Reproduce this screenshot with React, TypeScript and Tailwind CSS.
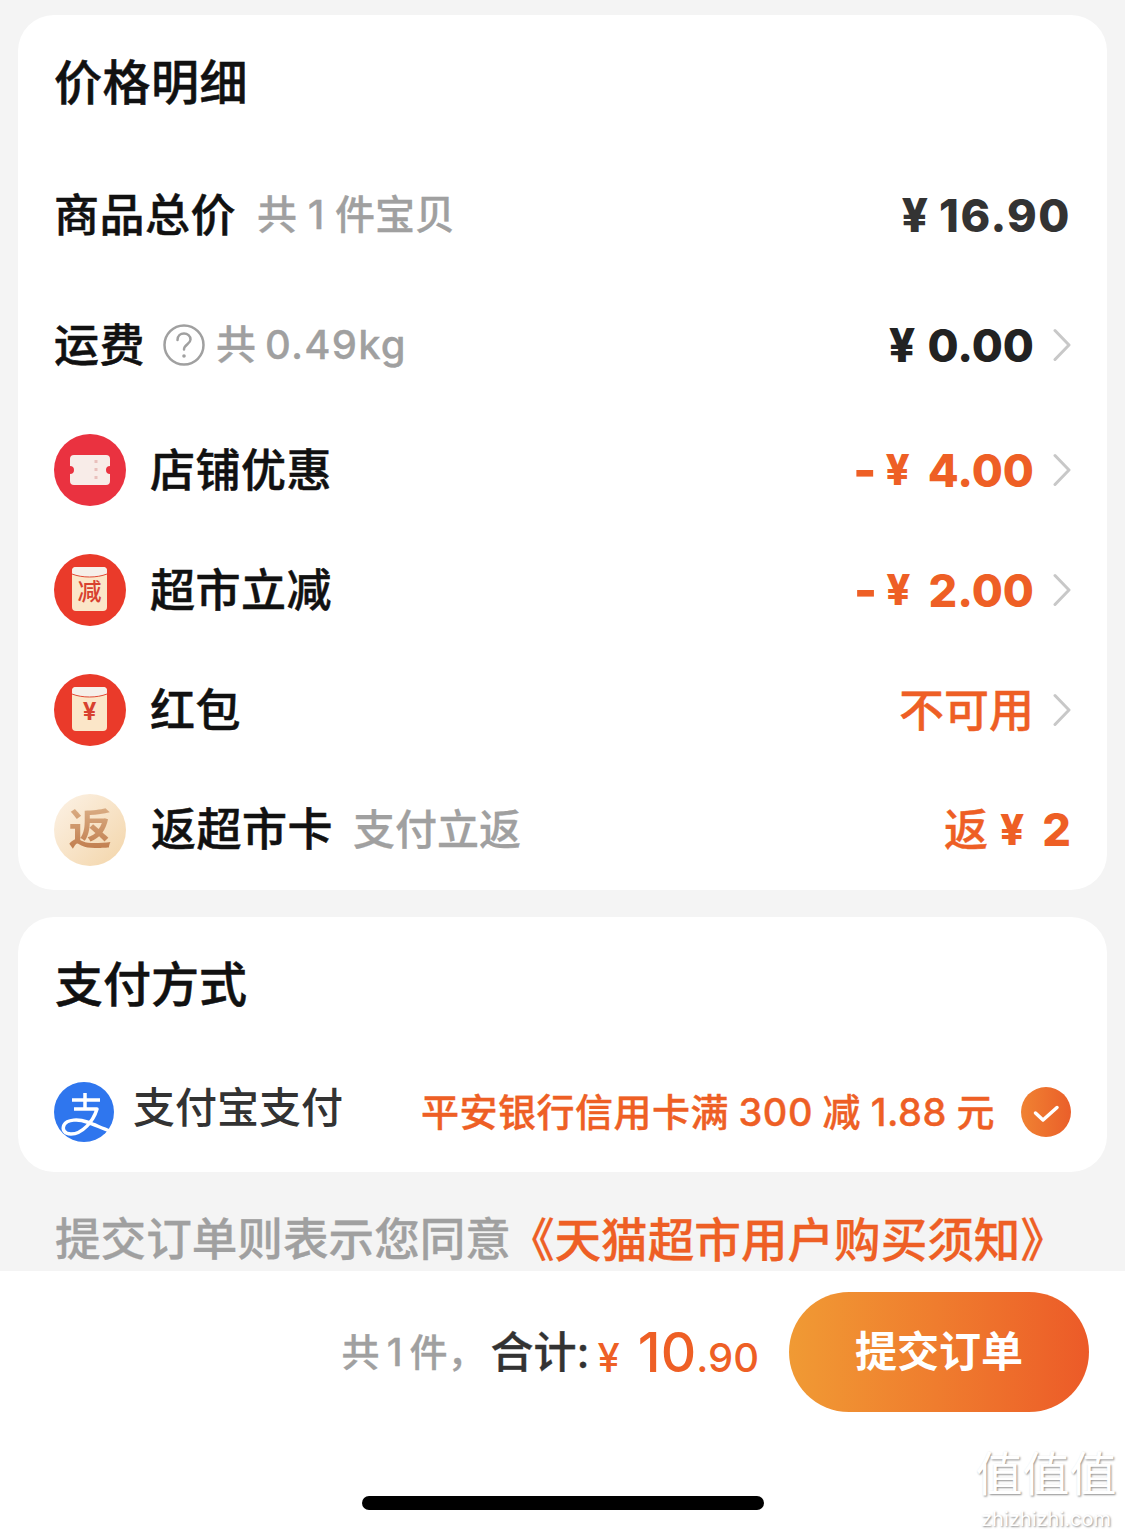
import type { ReactNode } from 'react';

const FONT = "font-['Inter','Noto_Sans_CJK_SC',sans-serif]";

function Chevron() {
  return (
    <svg width="22" height="36" viewBox="0 0 22 36" fill="none" className="ml-[15px] shrink-0">
      <path d="M6 3.500 20 18 6 32.500" stroke="#c8c8c8" strokeWidth="3" strokeLinecap="round" strokeLinejoin="round" />
    </svg>
  );
}

function Ticket() {
  return (
    <svg width="72" height="72" viewBox="0 0 72 72">
      <circle cx="36" cy="36" r="36" fill="#ea3240" />
      <path
        d="M20 21h32a4 4 0 0 1 4 4v7a4 4 0 0 0 0 8v7a4 4 0 0 1-4 4H20a4 4 0 0 1-4-4v-7a4 4 0 0 0 0-8v-7a4 4 0 0 1 4-4Z"
        fill="#f8ece8"
      />
      <path d="M42 26v20" stroke="#e9c0bc" strokeWidth="3" strokeDasharray="3 5" />
    </svg>
  );
}

function Envelope({ label, small }: { label: string; small?: boolean }) {
  return (
    <div className="relative h-[72px] w-[72px] shrink-0 rounded-full bg-[#ea3a2a]">
      <svg width="72" height="72" viewBox="0 0 72 72" className="absolute inset-0">
        <rect x="18" y="13" width="35" height="44" rx="4" fill="#fbe6c8" />
        <path d="M18 17a4 4 0 0 1 4-4h27a4 4 0 0 1 4 4v3c-10 4-25 4-35 0Z" fill="#f6f0ea" />
        <path d="M18 20c10 4 25 4 35 0" stroke="#e24a36" strokeWidth="1" fill="none" />
      </svg>
      <span
        className={`absolute inset-x-0 top-[24px] pr-[1px] text-center leading-[28px] text-[#d8412f] ${small ? 'text-[24px] font-bold' : 'text-[24px] font-medium'}`}
      >
        {label}
      </span>
    </div>
  );
}

function FanIcon() {
  return (
    <div className="flex h-[72px] w-[72px] shrink-0 items-center justify-center rounded-full bg-gradient-to-br from-[#fcf2e6] to-[#f3d5a9]">
      <span className="bg-gradient-to-b from-[#d9ac83] to-[#c07c4c] bg-clip-text text-[43px] font-bold leading-none text-transparent">
        返
      </span>
    </div>
  );
}

function AlipayIcon() {
  return (
    <svg width="60" height="60" viewBox="0 0 60 60" className="shrink-0">
      <circle cx="30" cy="30" r="30" fill="#2f76ee" />
      <path
        d="M18 18h28M31 11v15M20 27h23C39 40 28 52 17 52 10 52 8 47 10 43c3-6 15-6 23-3 8 3 15 6 23 9"
        stroke="#fff"
        strokeWidth="3.500"
        strokeLinejoin="round"
        fill="none"
      />
    </svg>
  );
}

function PriceRow({ children, right, h }: { children: ReactNode; right: ReactNode; h: string }) {
  return (
    <div className={`flex items-center justify-between pl-[36px] pr-[36px] ${h}`}>
      <div className="flex items-center">{children}</div>
      <div className="flex items-center">{right}</div>
    </div>
  );
}

function Label({ children }: { children: ReactNode }) {
  return (
    <span className="text-[45px] font-medium leading-none tracking-[0.5px] text-[#111] [-webkit-text-stroke:0.5px_#111]">
      {children}
    </span>
  );
}

function Gray({ children, className = '' }: { children: ReactNode; className?: string }) {
  return (
    <span className={`font-medium leading-none text-[#a0a0a0] [-webkit-text-stroke:0.3px_#a0a0a0] ${className}`}>
      {children}
    </span>
  );
}

function Discount({ value }: { value: string }) {
  return (
    <span className="flex items-center font-extrabold leading-none text-[#ee5f25]">
      <span className="text-[50px]">-</span>
      <span className="ml-[9px] text-[42px]">¥</span>
      <span className="ml-[18px] text-[45px]">{value}</span>
    </span>
  );
}

export default function App() {
  return (
    <div className={`relative flex h-[1535px] w-[1125px] flex-col overflow-hidden bg-[#f4f4f4] ${FONT}`}>
      <div className="mx-[18px] mt-[15px] h-[875px] shrink-0 rounded-[36px] bg-white">
        <div className="flex h-[135px] items-center pl-[36px]">
          <h2 className="text-[48px] font-medium leading-none tracking-[0.5px] text-[#111] [-webkit-text-stroke:0.5px_#111]">
            价格明细
          </h2>
        </div>
        <PriceRow
          h="h-[130px]"
          right={
            <span className="flex items-center font-extrabold leading-none text-[#333]">
              <span className="text-[46px]">¥</span>
              <span className="ml-[11px] text-[45px] tracking-[1.500px]">16.90</span>
            </span>
          }
        >
          <Label>商品总价</Label>
          <Gray className="ml-[21px] text-[40px]">共 1 件宝贝</Gray>
        </PriceRow>
        <PriceRow
          h="h-[130px]"
          right={
            <>
              <span className="flex items-center font-extrabold leading-none text-[#222]">
                <span className="text-[46px]">¥</span>
                <span className="ml-[12px] text-[45px]">0.00</span>
              </span>
              <Chevron />
            </>
          }
        >
          <Label>运费</Label>
          <svg width="42" height="42" viewBox="0 0 42 42" className="ml-[18px]" fill="none">
            <circle cx="21" cy="21" r="19.500" stroke="#a0a0a0" strokeWidth="2.500" />
            <path
              d="M14.500 16c0-4 3-6.500 6.500-6.500s6.500 2.500 6.500 6c0 4.500-6.500 5-6.500 10"
              stroke="#a0a0a0"
              strokeWidth="2.500"
              strokeLinecap="round"
            />
            <circle cx="21" cy="32" r="1.800" fill="#a0a0a0" />
          </svg>
          <Gray className="ml-[11px] text-[40px] tracking-[1.200px] [word-spacing:-4px]">共 0.49kg</Gray>
        </PriceRow>
        <PriceRow h="h-[120px]" right={<><Discount value="4.00" /><Chevron /></>}>
          <Ticket />
          <span className="ml-[24px]"><Label>店铺优惠</Label></span>
        </PriceRow>
        <PriceRow h="h-[120px]" right={<><Discount value="2.00" /><Chevron /></>}>
          <Envelope label="减" />
          <span className="ml-[24px]"><Label>超市立减</Label></span>
        </PriceRow>
        <PriceRow
          h="h-[120px]"
          right={
            <>
              <span className="text-[45px] font-medium leading-none text-[#ee5f25] [-webkit-text-stroke:0.4px_#ee5f25]">不可用</span>
              <Chevron />
            </>
          }
        >
          <Envelope label="¥" small />
          <span className="ml-[24px]"><Label>红包</Label></span>
        </PriceRow>
        <PriceRow
          h="h-[119px]"
          right={
            <span className="flex items-center leading-none text-[#ee5f25]">
              <span className="text-[44px] font-medium [-webkit-text-stroke:0.4px_#ee5f25]">返</span>
              <span className="ml-[12px] text-[42px] font-extrabold">¥</span>
              <span className="ml-[18px] text-[45px] font-extrabold">2</span>
            </span>
          }
        >
          <FanIcon />
          <span className="ml-[25px]"><Label>返超市卡</Label></span>
          <Gray className="ml-[20px] text-[42px]">支付立返</Gray>
        </PriceRow>
      </div>

      <div className="mx-[18px] mt-[27px] h-[255px] shrink-0 rounded-[36px] bg-white">
        <div className="flex h-[136px] items-center pl-[37px]">
          <h2 className="text-[48px] font-medium leading-none text-[#111] [-webkit-text-stroke:0.5px_#111]">支付方式</h2>
        </div>
        <div className="mt-[29px] flex items-center justify-between pl-[36px] pr-[36px]">
          <div className="flex items-center">
            <AlipayIcon />
            <span className="ml-[19px] mb-[8px] text-[42px] font-medium leading-none text-[#333]">支付宝支付</span>
          </div>
          <div className="flex items-center">
            <span className="text-[38px] font-medium leading-none tracking-[0.5px] text-[#ee5f25] [word-spacing:-1px] [-webkit-text-stroke:0.4px_#ee5f25]">
              平安银行信用卡满 300 减 1.88 元
            </span>
            <svg width="50" height="50" viewBox="0 0 50 50" className="ml-[26px]" fill="none">
              <defs>
                <linearGradient id="check" x1="0" x2="1" y1="0" y2="0">
                  <stop offset="0" stopColor="#f08232" />
                  <stop offset="1" stopColor="#ea5f2a" />
                </linearGradient>
              </defs>
              <circle cx="25" cy="25" r="25" fill="url(#check)" />
              <path d="m14.500 26 7.500 7 14-12.500" stroke="#fff" strokeWidth="3.500" strokeLinecap="round" strokeLinejoin="round" />
            </svg>
          </div>
        </div>
      </div>

      <div className="flex h-[99px] shrink-0 items-start whitespace-nowrap pl-[55px] pt-[45px] font-medium leading-none">
        <span className="text-[45.600px] text-[#a0a0a0] [-webkit-text-stroke:0.3px_#a0a0a0]">提交订单则表示您同意</span>
        <span className="-ml-[3px] text-[46.600px] text-[#ee5f25] [-webkit-text-stroke:0.3px_#ee5f25]">《天猫超市用户购买须知》</span>
      </div>

      <div className="flex flex-1 flex-col bg-white">
        <div className="flex h-[162px] items-center justify-end pr-[36px]">
          <span className="text-[38px] font-medium leading-none text-[#a0a0a0] [word-spacing:-3px] [-webkit-text-stroke:0.3px_#a0a0a0]">
            共 1 件，
          </span>
          <span className="ml-[5px] text-[43px] font-medium leading-none text-[#333] [-webkit-text-stroke:0.3px_#333]">合计:</span>
          <div className="ml-[8px] flex items-baseline leading-none text-[#ee5f25]">
            <span className="text-[40px] font-medium">¥</span>
            <span className="ml-[18px] text-[55px] font-medium">10</span>
            <span className="text-[40px] font-medium">.90</span>
          </div>
          <button className="ml-[30px] flex h-[120px] w-[300px] items-center justify-center rounded-full bg-gradient-to-r from-[#f09a34] to-[#ec5a28] text-[42px] font-bold leading-none text-white">
            提交订单
          </button>
        </div>
        <div className="flex justify-center pl-[1px] pt-[63px]">
          <div className="h-[14px] w-[402px] rounded-full bg-black" />
        </div>
      </div>

      <div className="absolute left-[974px] top-[1450px] flex w-[144px] flex-col items-center whitespace-nowrap leading-none text-white [text-shadow:1px_1px_2px_#8f8f8f]">
        <span className="text-[47px] font-normal">值值值</span>
        <span className="mt-[12px] text-[20px] font-normal">zhizhizhi.com</span>
      </div>
    </div>
  );
}
